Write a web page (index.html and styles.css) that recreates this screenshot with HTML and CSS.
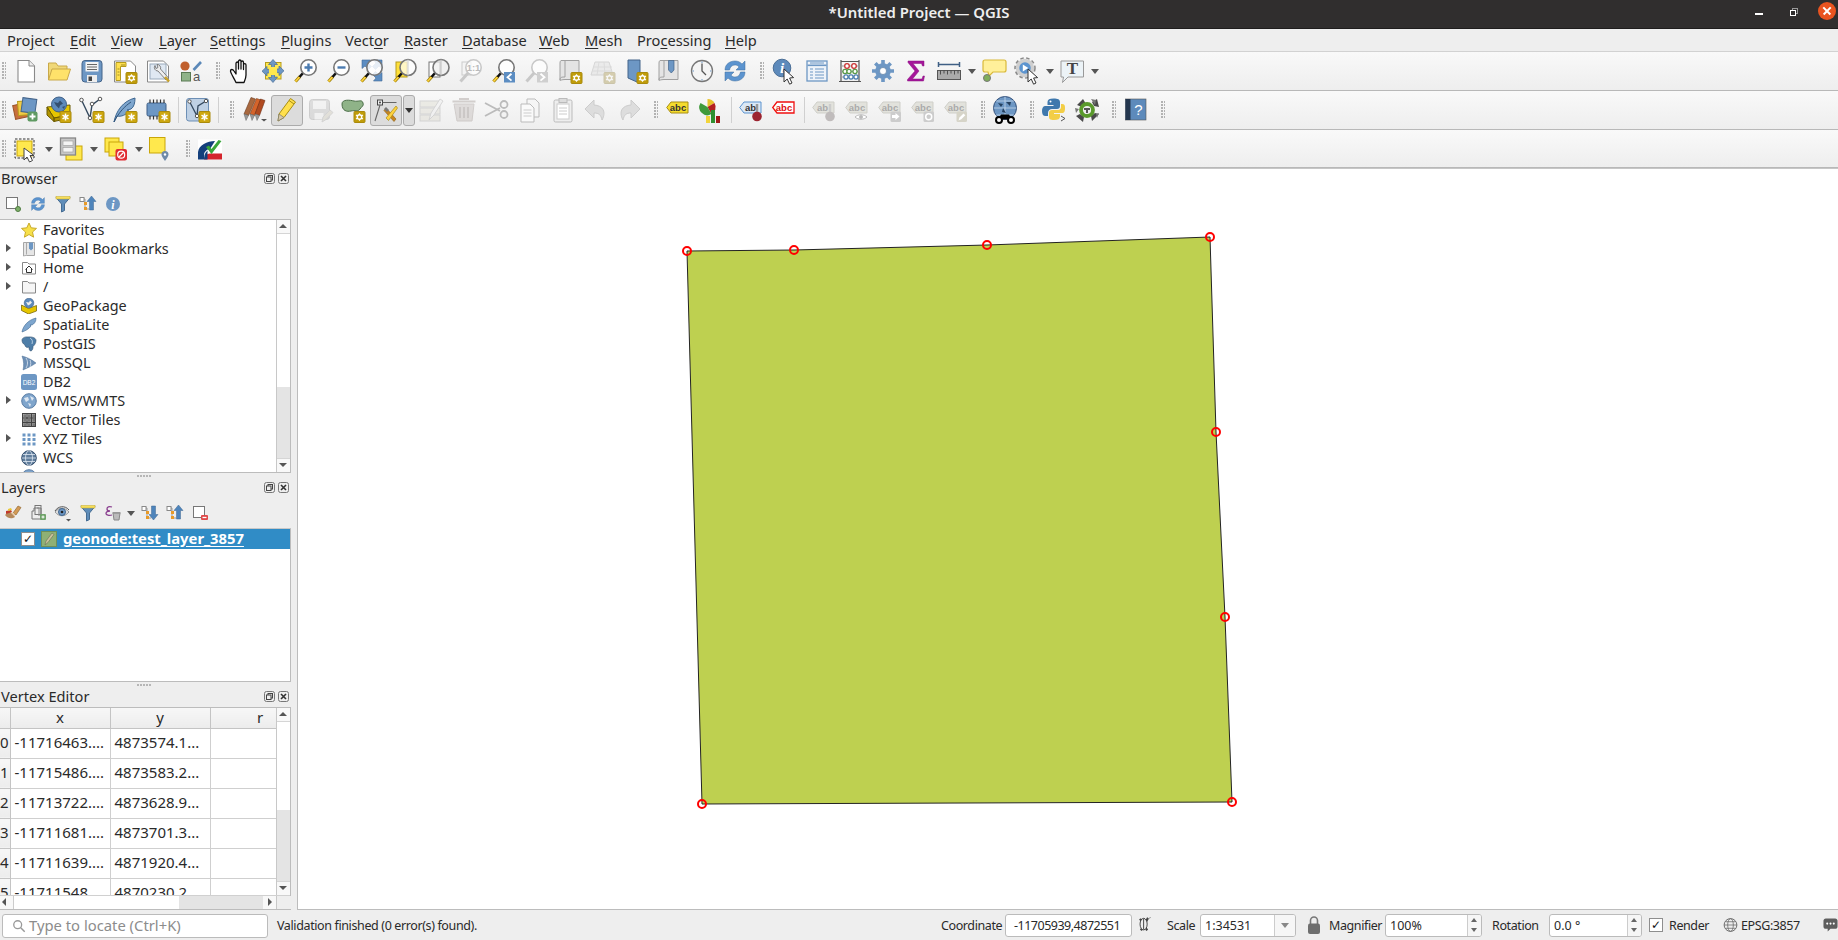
FILE: index.html
```html
<!DOCTYPE html>
<html lang="en">
<head>
<meta charset="utf-8">
<title>*Untitled Project — QGIS</title>
<link rel="stylesheet" href="styles.css">
</head>
<body>
<svg class="defs" xmlns="http://www.w3.org/2000/svg">
<defs>
<g id="star"><rect x="15" y="15.5" width="11" height="11" rx="1" fill="#cda70f" stroke="#a98a0c"/><path d="M20.5 17.5v7M17.5 19.2l6 3.6M17.5 22.8l6-3.6" stroke="#fff" stroke-width="1.5"/></g>
<g id="gear"><rect x="15" y="15.5" width="11" height="11" rx="1" fill="#c09c0a" stroke="#a98a0c"/><circle cx="20.5" cy="21" r="2.2" fill="none" stroke="#fff" stroke-width="1.4"/><path d="M20.5 17.2v1.6M20.5 23.2v1.6M17 19l1.5.9M22.5 22l1.5.9M17 23l1.5-.9M22.5 20l1.5-.9" stroke="#fff" stroke-width="1.2"/></g>
<g id="mg"><path d="M8 19.5L3.5 24.5" stroke="#9a7d00" stroke-width="3.2"/><path d="M8 19.5L3.5 24.5" stroke="#ffd23e" stroke-width="1.7"/><path d="M11.5 15.5L7.5 20" stroke="#111" stroke-width="2.6"/><circle cx="16.5" cy="10.5" r="7.7" fill="#fff" fill-opacity=".85" stroke="#777" stroke-width="1.6"/></g>
<g id="mgg"><path d="M11.5 15.5L3.5 24.5" stroke="#c8c8c8" stroke-width="3"/><circle cx="16.5" cy="10.5" r="7.7" fill="#fff" fill-opacity=".7" stroke="#c8c8c8" stroke-width="1.6"/></g>
<g id="cur"><path d="M0 0L0 13 3.2 10 5.6 15.2 8 14 5.6 9 9.6 8.6Z" fill="#fff" stroke="#333" stroke-width="1"/></g>
<g id="tag"><path d="M7 6h17v11H7l-4.3-5.500z" fill="#e2e2dc" stroke="#cfcfc9"/></g>
</defs>

<symbol id="new" viewBox="0 0 28 28"><path d="M6 3.5h11l5.500 5.500v16H6z" fill="#fff" stroke="#8a8a8a" stroke-width="1.100"/><path d="M17 3.500v5.500h5.500" fill="#eee" stroke="#8a8a8a"/></symbol>
<symbol id="open" viewBox="0 0 28 28"><path d="M3.500 23V6h7.500l2 3h9v4" fill="#f0d878" stroke="#c9a94a"/><path d="M3.500 23l3.500-11h18.500l-3.500 11z" fill="#ffe26a" stroke="#c9a94a"/></symbol>
<symbol id="save" viewBox="0 0 28 28"><rect x="4" y="3.500" width="20" height="21.500" rx="3" fill="#6d97c4" stroke="#44648a"/><rect x="7.500" y="5" width="13" height="9.500" fill="#f4f4f4"/><path d="M9 7.500h10M9 10h10M9 12.500h10" stroke="#666"/><rect x="9" y="18" width="10" height="7" fill="#eee"/><rect x="10.500" y="19.500" width="3.500" height="4.500" fill="#444"/></symbol>
<symbol id="layout" viewBox="0 0 28 28"><path d="M3.500 4h16l5 5v16h-21z" fill="#fff" stroke="#888"/><path d="M5 5.500h10v4H9.500v14H5z" fill="#ffe04d" stroke="#b69b1c"/><path d="M6.500 12h2M6.500 15h2M6.500 18h2M11 7v2M13 7v2" stroke="#8a7a20" stroke-width=".8"/><use href="#gear"/></symbol>
<symbol id="mgr" viewBox="0 0 28 28"><path d="M3.500 4h16l5 5v16h-21z" fill="#fff" stroke="#888"/><rect x="6" y="7" width="16" height="15" fill="#dfe8f2" stroke="#9ab"/><path d="M11 8.500a3.500 3.500 0 0 0 3 5.500l8 9 2.500-2-8-9a3.500 3.500 0 0 0-3.500-4.500l1 3-2 1z" fill="#eee" stroke="#666" stroke-width=".8"/><path d="M21 20l4 4.500" stroke="#c9a32a" stroke-width="2.500"/></symbol>
<symbol id="style" viewBox="0 0 28 28"><circle cx="8" cy="9" r="4.600" fill="#c0602e"/><path d="M16.500 13L24 5" stroke="#5b88b8" stroke-width="2.600"/><rect x="4.500" y="15.500" width="9" height="8.500" fill="#8fb388" stroke="#5a7a54"/></symbol>
<symbol id="hand" viewBox="0 0 28 28"><path d="M10 25.500C8 21 4.500 16 4.500 14c0-2 2.300-2 3.500 0l2 3V6.500c0-2 2.500-2 2.500 0V12V4.500c0-2 2.500-2 2.500 0V12V5.500c0-2 2.500-2 2.500 0v7V8c0-1.800 2.500-1.800 2.500 0v10c0 3-1 5-2 7.500z" fill="#fff" stroke="#111" stroke-width="1.300" stroke-linejoin="round"/></symbol>
<symbol id="panmap" viewBox="0 0 28 28"><rect x="6.500" y="5.500" width="15.500" height="16.500" fill="#ffe84d" stroke="#b69b1c"/><path d="M14 2.500l4.500 5h-3v4.500h4.500v-3l5 4.800-5 4.800v-3h-4.500v4.500h3L14 25.500l-4.500-5h3V16H8v3l-5-4.800 5-4.800v3h4.500V7.500h-3z" fill="#6d97c4" stroke="#4a6e96" stroke-width=".7"/><rect x="10" y="10" width="8" height="8" fill="#ffe84d"/></symbol>
<symbol id="zin" viewBox="0 0 28 28"><use href="#mg"/><path d="M16.500 6.500v8M12.500 10.500h8" stroke="#4b7bb0" stroke-width="2.400"/></symbol>
<symbol id="zout" viewBox="0 0 28 28"><use href="#mg"/><path d="M12.500 10.500h8" stroke="#4b7bb0" stroke-width="2.400"/></symbol>
<symbol id="zfull" viewBox="0 0 28 28"><path d="M4 3h8.500L10 6l3.500 3.500-3 3L7 9l-3 2.500zM24 3v8.500L21 9l-3.500 3.500-3-3L18 6l-2.500-3zM24 24h-8.500l2.500-3-3.500-3.500 3-3L21 18l3-2.500z" fill="#5c8dc2" stroke="#416a97" stroke-width=".6"/><use href="#mg"/></symbol>
<symbol id="zsel" viewBox="0 0 28 28"><rect x="5" y="5" width="11" height="15" fill="#ffe03a" stroke="#b69b1c"/><path d="M8 19.500L3.500 24.500" stroke="#9a7d00" stroke-width="3.200"/><path d="M8 19.500L3.500 24.500" stroke="#ffd23e" stroke-width="1.700"/><path d="M11.500 15.500L7.500 20" stroke="#111" stroke-width="2.600"/><circle cx="17" cy="10.500" r="8" fill="#fff" fill-opacity=".7" stroke="#777" stroke-width="1.600"/><path d="M17 2.500v16" stroke="#ccc"/></symbol>
<symbol id="zlay" viewBox="0 0 28 28"><rect x="5" y="5" width="11" height="15" fill="#fff" stroke="#777"/><path d="M8 19.500L3.500 24.500" stroke="#9a7d00" stroke-width="3.200"/><path d="M8 19.500L3.500 24.500" stroke="#ffd23e" stroke-width="1.700"/><path d="M11.500 15.500L7.500 20" stroke="#111" stroke-width="2.600"/><circle cx="17" cy="10.500" r="8" fill="#eee" fill-opacity=".7" stroke="#777" stroke-width="1.600"/><path d="M17 2.500v16" stroke="#bbb"/></symbol>
<symbol id="z11" viewBox="0 0 28 28"><rect x="5" y="5" width="9" height="13" fill="#f4f4f4" stroke="#ccc"/><use href="#mgg"/></symbol>
<symbol id="zlast" viewBox="0 0 28 28"><use href="#mg"/><rect x="14" y="15" width="11" height="10.500" fill="#5c8dc2"/><path d="M21.500 16.800l-4 3.400 4 3.400" fill="none" stroke="#fff" stroke-width="1.800"/></symbol>
<symbol id="znext" viewBox="0 0 28 28"><use href="#mgg"/><rect x="14" y="15" width="11" height="10.500" fill="#cfcfcf"/><path d="M17.500 16.800l4 3.400-4 3.400" fill="none" stroke="#fff" stroke-width="1.800"/></symbol>
<symbol id="newmap" viewBox="0 0 28 28"><path d="M5 3.500h18v19H9c-3 0-5 1-5 1V6c0-2 1-2.500 1-2.500z" fill="#e4e4e4" stroke="#a0a0a0"/><path d="M4 23c0-3 2-3 5-3V3.500" fill="none" stroke="#a0a0a0"/><use href="#gear"/></symbol>
<symbol id="map3d" viewBox="0 0 28 28"><path d="M6 5h14l4 13H2z" fill="#ddd" stroke="#aaa"/><path d="M10 5L8 18M15 5l1 13M4 10h19M3 14h20" stroke="#bbb"/><use href="#gear"/></symbol>
<symbol id="bknew" viewBox="0 0 28 28"><path d="M6 3h12v18l-3 4-9-4z" fill="#6d97c4" stroke="#44648a"/><use href="#gear"/></symbol>
<symbol id="bkshow" viewBox="0 0 28 28"><path d="M5 3.500h18v19H9c-3 0-5 1-5 1V6c0-2 1-2.500 1-2.500z" fill="#e4e4e4" stroke="#a0a0a0"/><path d="M4 23c0-3 2-3 5-3V3.500" fill="none" stroke="#a0a0a0"/><path d="M13.500 3.500h5.500v9.500l-2.700 3-2.800-3z" fill="#6d97c4" stroke="#44648a" stroke-width=".7"/></symbol>
<symbol id="clock" viewBox="0 0 28 28"><circle cx="14" cy="14" r="10.500" fill="#f4f4f4" stroke="#777" stroke-width="1.300"/><path d="M14 6.500V14l4 4" fill="none" stroke="#555" stroke-width="1.300"/><path d="M14 4.500v1.500M14 22v1.500M4.500 14H6M22 14h1.500" stroke="#6d97c4"/></symbol>
<symbol id="refresh" viewBox="0 0 28 28"><path d="M4 13c0-6 5-9 10-9 3 0 5 1 7 3l3-3v9h-9l3-3c-1-1.500-2.500-2-4-2-3 0-5 2-5.500 5zM24 15c0 6-5 9-10 9-3 0-5-1-7-3l-3 3v-9h9l-3 3c1 1.500 2.500 2 4 2 3 0 5-2 5.500-5z" fill="#5c94cf" stroke="#3e6e9f" stroke-width=".5"/></symbol>
<symbol id="ident" viewBox="0 0 28 28"><circle cx="12" cy="11" r="8.800" fill="#5d8abb" stroke="#4a6e96"/></symbol>
<symbol id="attr" viewBox="0 0 28 28"><rect x="4" y="4" width="20" height="20" fill="#eef3f9" stroke="#6d97c4" stroke-width="1.300"/><path d="M4.500 7.500h19v1.600h-19z" fill="#6d97c4"/><path d="M7 6h14M7 12h3M12 12h9M7 15h3M12 15h9M7 18h3M12 18h9M7 21h3M12 21h9" stroke="#6d97c4"/></symbol>
<symbol id="abacus" viewBox="0 0 28 28"><path d="M5 3v21M23 3v21M5 4.500h18M3 24.500h22" stroke="#555" stroke-width="1.200" fill="none"/><path d="M5 9h18M5 14.500h18M5 20h18" stroke="#999"/><circle cx="11" cy="9" r="2.300" fill="#fff" stroke="#c33" stroke-width="1.300"/><circle cx="18" cy="9" r="2.300" fill="#fff" stroke="#c33" stroke-width="1.300"/><circle cx="9" cy="14.500" r="2.100" fill="#fff" stroke="#5a9a4a" stroke-width="1.300"/><circle cx="13" cy="14.500" r="2.100" fill="#fff" stroke="#5a9a4a" stroke-width="1.300"/><circle cx="19" cy="14.500" r="2.100" fill="#fff" stroke="#5a9a4a" stroke-width="1.300"/><circle cx="10" cy="20" r="2.100" fill="#fff" stroke="#4a7db0" stroke-width="1.300"/><circle cx="15" cy="20" r="2.100" fill="#fff" stroke="#4a7db0" stroke-width="1.300"/><circle cx="20" cy="20" r="2.100" fill="#fff" stroke="#4a7db0" stroke-width="1.300"/></symbol>
<symbol id="cog" viewBox="0 0 28 28"><circle cx="14" cy="14" r="5.800" fill="none" stroke="#6d97c4" stroke-width="4"/><path d="M14 3v22M3 14h22M6.300 6.300l15.400 15.400M21.700 6.300L6.300 21.700" stroke="#6d97c4" stroke-width="3.600"/><circle cx="14" cy="14" r="3.500" fill="#fff" stroke="#4a6e96" stroke-width=".6"/></symbol>
<symbol id="sigma" viewBox="0 0 28 28"><path d="M6 4h16v5h-1.500l-1-2.500h-8.500l6 7.500-6.500 8H20l1-3h1.500L21.500 24H5.500v-1.500l7.500-8.500-7-8.500z" fill="#a5169a" stroke="#8a1180" stroke-width=".5"/></symbol>
<symbol id="measure" viewBox="0 0 28 28"><path d="M3 7.500h22M3.500 5v5M24.500 5v5" stroke="#3f5f85" stroke-width="1.500"/><rect x="2.500" y="13.500" width="23" height="9" fill="#aaa" stroke="#555"/><path d="M5.500 13.500v4M9 13.500v3M12.500 13.500v4M16 13.500v3M19.500 13.500v4M23 13.500v3" stroke="#444" stroke-width=".9"/></symbol>
<symbol id="tip" viewBox="0 0 28 28"><path d="M5 3h19c1.500 0 2 1 2 2v8c0 1-.5 2-2 2H13l-4 4-1-4H5c-1.500 0-2-1-2-2V5c0-1 .5-2 2-2z" fill="#fff09a" stroke="#d9b93a" stroke-width="1.200"/><circle cx="7" cy="21" r="3.500" fill="#7fae5b" stroke="#777"/></symbol>
<symbol id="tips" viewBox="0 0 28 28"><circle cx="12" cy="11" r="7.500" fill="#5c94cf" stroke="#cfcfcf" stroke-width="3.500"/><circle cx="12" cy="11" r="10" fill="none" stroke="#888" stroke-width="1.500" stroke-dasharray="3.500 2.500"/><path d="M9.800 7.500v7l5.500-3.500z" fill="#fff"/><use href="#cur" x="15" y="12"/></symbol>
<symbol id="ttext" viewBox="0 0 28 28"><path d="M3 4h22.500v16H10l-5.500 5.500 1-5.500H3z" fill="#ecf3f7" stroke="#999"/></symbol>

<symbol id="dsm" viewBox="0 0 28 28"><rect x="2" y="8" width="14" height="14" transform="rotate(-12 9 15)" fill="#c86f3c" stroke="#9a5328"/><rect x="6" y="5" width="14" height="14" transform="rotate(-4 13 12)" fill="#f1cb45" stroke="#b69b1c"/><rect x="10" y="2.500" width="14" height="14" transform="rotate(8 17 9)" fill="#6d97c4" stroke="#44648a"/><rect x="15.500" y="15.500" width="10" height="10" rx="2" fill="#5f9a62"/><path d="M20.500 17.500v6M17.500 20.500h6" stroke="#fff" stroke-width="1.800"/></symbol>
<symbol id="gpkg" viewBox="0 0 28 28"><path d="M2 11l7 11 16-3V9z" fill="#e6c600" stroke="#6b5a00"/><path d="M2 11v8l7 6.500V22zM9 22v3.500L25 22v-3z" fill="#b39500" stroke="#6b5a00"/><circle cx="14" cy="8.500" r="7.500" fill="#5d8abb" stroke="#3e5f87"/><path d="M9 6l4 1 2-2.500 3 3-3 2-1 3-3-3zM17 11l3-1-1 3z" fill="#35506f"/><use href="#star"/></symbol>
<symbol id="vnew" viewBox="0 0 28 28"><path d="M3.500 4L12 22 14 9l8-6" fill="none" stroke="#34495e" stroke-width="1.400"/><circle cx="3.500" cy="4" r="1.800" fill="#fff" stroke="#555"/><circle cx="12" cy="22" r="1.800" fill="#fff" stroke="#555"/><circle cx="14" cy="8" r="1.800" fill="#fff" stroke="#555"/><circle cx="22" cy="3" r="1.800" fill="#fff" stroke="#555"/><use href="#star"/></symbol>
<symbol id="feather" viewBox="0 0 28 28"><path d="M3 26C5 15 12 5 24 2c0 5-1 9-4 11l-4 1 2 1c-3 4-8 6-12 5z" fill="#7ea6ce" stroke="#3e6690"/><path d="M3 26C8 16 14 10 20 6" stroke="#31557b" fill="none"/><use href="#star"/></symbol>
<symbol id="chip" viewBox="0 0 28 28"><rect x="3" y="7" width="19" height="13" rx="1.500" fill="#6d97c4" stroke="#3e5f87"/><path d="M6 3.500V7M9.500 3.500V7M13 3.500V7M16.500 3.500V7M20 3.500V7M6 20v3.500M9.500 20v3.500M13 20v3.500" stroke="#333" stroke-width="1.200"/><use href="#star"/></symbol>
<symbol id="virt" viewBox="0 0 28 28"><rect x="2.500" y="2.500" width="22" height="22.500" rx="2.500" fill="#bed0e4" stroke="#6d8fb5"/><path d="M5.500 5.500L13 20 14 10l8-5" fill="none" stroke="#33485f" stroke-width="1.300"/><circle cx="5.500" cy="5.500" r="1.700" fill="#fff" stroke="#555"/><circle cx="13" cy="20" r="1.700" fill="#fff" stroke="#555"/><circle cx="22" cy="5" r="1.700" fill="#fff" stroke="#555"/><use href="#star"/></symbol>
<symbol id="pens" viewBox="0 0 28 28"><path d="M4 18l7-16.500 4.500 1.500-7 16.500z" fill="#a8683f" stroke="#6b3a1e" stroke-width=".6"/><path d="M4 18l4.500 1.500L6 24.500z" fill="#999" stroke="#666" stroke-width=".5"/><path d="M10 18l6.500-15.500 4.500 1.500-6.500 15.500z" fill="#d5642b" stroke="#7a3a18" stroke-width=".6"/><path d="M10 18l4.500 1.500-2.500 5z" fill="#999" stroke="#666" stroke-width=".5"/><path d="M15 18l5.500-15 4.500 1.500-5.500 15z" fill="#b04a20" stroke="#6b2f15" stroke-width=".6"/><path d="M15 18l4.500 1.500-2.500 5z" fill="#999" stroke="#666" stroke-width=".5"/><path d="M21 23h6l-3 2.500z" fill="#555"/></symbol>
<symbol id="pen" viewBox="0 0 28 28"><path d="M5 25l1-7L17.500 2.500l5 3.500L11 21.500z" fill="#ffe04d" stroke="#a88e15"/><path d="M6 18l5 3.500-6 3.500z" fill="#d8c9a8" stroke="#777" stroke-width=".7"/><path d="M16 4.500l5 3.500" stroke="#a88e15"/></symbol>
<symbol id="savee" viewBox="0 0 28 28"><rect x="3.500" y="3.500" width="20" height="20" rx="3" fill="#bbb" stroke="#999"/><rect x="7" y="5" width="13" height="8" fill="#eee"/><rect x="8.500" y="17" width="9" height="6.500" fill="#eee"/><path d="M16 26l1-5 7-7 3 2.500-7 7z" fill="#cfc7a7" stroke="#aaa"/></symbol>
<symbol id="poly" viewBox="0 0 28 28"><path d="M3 8c0-5 8-4 12-3s8-2 9 2c1 3-1 3-3 6s-5 1-9 2-9 0-9-7z" fill="#8fb388" stroke="#4b6e48"/><use href="#gear"/></symbol>
<symbol id="vtool" viewBox="0 0 28 28"><rect x="5.500" y="4" width="5" height="5" fill="#eee" stroke="#444"/><circle cx="8" cy="6.500" r="1" fill="#444"/><path d="M10.500 6.500h14M8 9L3 25" stroke="#666" stroke-width="1.100" fill="none"/><path d="M14 12l10 11-2 2.500-10-11z" fill="#c8861e" stroke="#8a5a10" stroke-width=".6"/><path d="M24 10L14 22l2.500 2.500L25.500 12z" fill="#ffd23e" stroke="#a88e15" stroke-width=".7"/><path d="M12 13l2-2 3 3-2 2z" fill="#777"/></symbol>
<symbol id="medit" viewBox="0 0 28 28"><rect x="3" y="5" width="20" height="6" fill="#dfdcc4" stroke="#aaa"/><rect x="3" y="12" width="20" height="6" fill="#dfdcc4" stroke="#aaa"/><rect x="3" y="19" width="20" height="6" fill="#dfdcc4" stroke="#aaa"/><path d="M12 24l2-7 9-14 3 2-9 14z" fill="#eee" stroke="#aaa"/></symbol>
<symbol id="trash" viewBox="0 0 28 28"><path d="M4 8h20l-2 17H7z" fill="#c8bab4" stroke="#a8968f"/><path d="M2.500 5.500h23M9 3h10" stroke="#a8968f" stroke-width="2"/><path d="M10 11v11M14 11v11M18 11v11" stroke="#8f7d76" stroke-width="1.500"/></symbol>
<symbol id="cut" viewBox="0 0 28 28"><path d="M2 7l15 8M2 20l15-8" stroke="#bbb" stroke-width="1.800"/><circle cx="21" cy="8.500" r="3.500" fill="none" stroke="#bbb" stroke-width="1.800"/><circle cx="21" cy="18.500" r="3.500" fill="none" stroke="#bbb" stroke-width="1.800"/></symbol>
<symbol id="copy" viewBox="0 0 28 28"><path d="M11 3h8l4 4v14H11z" fill="#f6f6f6" stroke="#bbb"/><path d="M5 8h9l4 4v14H5z" fill="#fafafa" stroke="#bbb"/><path d="M7.500 14h8M7.500 17h8M7.500 20h8" stroke="#ccc"/></symbol>
<symbol id="paste" viewBox="0 0 28 28"><rect x="5" y="4" width="18" height="22" rx="1.500" fill="#eee" stroke="#bbb"/><rect x="10" y="2.500" width="8" height="4" fill="#ddd" stroke="#bbb"/><rect x="8" y="8" width="12" height="15" fill="#fff" stroke="#ccc"/><path d="M10 12h8M10 15h8M10 18h8" stroke="#ccc"/></symbol>
<symbol id="undo" viewBox="0 0 28 28"><path d="M12 4L3 13l9 9v-5c5 0 7 2 8 7 3-5 4-14-8-15z" fill="#ddd" stroke="#ccc"/></symbol>
<symbol id="redo" viewBox="0 0 28 28"><path d="M16 4l9 9-9 9v-5c-5 0-7 2-8 7-3-5-4-14 8-15z" fill="#ddd" stroke="#ccc"/></symbol>
<symbol id="lab" viewBox="0 0 28 28"><path d="M7 6h17v11H7l-4.300-5.500z" fill="#f5dc2d" stroke="#a88e15"/></symbol>
<symbol id="diag" viewBox="0 0 28 28"><path d="M10.500 3a8 8 0 0 1 7 4L10.500 11z" fill="#e8c22a"/><path d="M17.500 7a8 8 0 0 1-3 11L10.500 11z" fill="#b32020"/><path d="M14.500 18a8 8 0 0 1-11-11l7 4z" fill="#3f9a3a"/><rect x="9" y="20" width="4" height="7" fill="#f2d43b"/><rect x="14" y="14" width="4" height="13" fill="#2f8f2f"/><rect x="19" y="20" width="4" height="7" fill="#a11818"/></symbol>
<symbol id="labp" viewBox="0 0 28 28"><path d="M7 6h17v11H7l-4.300-5.500z" fill="#dbe8f6" stroke="#5c94cf"/></symbol>
<symbol id="pin" viewBox="0 0 28 28"><path d="M20 8v9" stroke="#999" stroke-width="2.500"/><circle cx="20" cy="20.500" r="4.800" fill="#9c2430"/></symbol>
<symbol id="labr" viewBox="0 0 28 28"><path d="M7 6h17v11H7l-4.300-5.500z" fill="#fff" stroke="#f01010" stroke-width="1.300"/></symbol>
<symbol id="labd" viewBox="0 0 28 28"><use href="#tag"/></symbol>
<symbol id="pind" viewBox="0 0 28 28"><path d="M20 8v9" stroke="#ccc" stroke-width="2.500"/><circle cx="20" cy="20.500" r="4.800" fill="#c0bcbc"/></symbol>
<symbol id="ove" viewBox="0 0 28 28"><path d="M12 21c3-3 9-3 12 0-3 3-9 3-12 0z" fill="#fff" stroke="#bbb"/><circle cx="18" cy="21" r="2" fill="#bbb"/></symbol>
<symbol id="ovm" viewBox="0 0 28 28"><rect x="14.500" y="15.500" width="10.500" height="10.500" rx="1.500" fill="#ccc"/><path d="M16 19h3.500v-2l4 3.500-4 3.500v-2H16z" fill="#fff"/></symbol>
<symbol id="ovo" viewBox="0 0 28 28"><rect x="14.500" y="15.500" width="10.500" height="10.500" rx="1.500" fill="#ccc"/><circle cx="19.700" cy="20.700" r="3" fill="none" stroke="#fff" stroke-width="1.500"/></symbol>
<symbol id="ovc" viewBox="0 0 28 28"><rect x="14.500" y="15.500" width="10.500" height="10.500" rx="1.500" fill="#d6d4c8"/><path d="M16.500 24.500l1-3 4-4 1.800 1.800-4 4z" fill="#fff"/></symbol>
<symbol id="osm" viewBox="0 0 28 28"><circle cx="14" cy="12" r="11.500" fill="#6d97c4" stroke="#33507a"/><path d="M2.500 12h23M14 .5v23M5 5h18M5 19h18" stroke="#cfe0f0" stroke-width=".7"/><path d="M7 7l5 1-2 3zM15 6h5l-1 4zM12 12l3 5-4-1z" fill="#24405f"/><path d="M10 18.500h8l3 5H7z" fill="#000"/><circle cx="8" cy="24" r="3" fill="#fff" stroke="#000" stroke-width="2"/><circle cx="20" cy="24" r="3" fill="#fff" stroke="#000" stroke-width="2"/></symbol>
<symbol id="py" viewBox="0 0 28 28"><path d="M13.500 2.500c-4 0-6 1-6 3.500V9h6v1H5.500C3 10 2 12 2 15s1 5 3.500 5H8v-3c0-2.500 2-4 4-4h5c2 0 3-1 3-3V6c0-2.500-2-3.500-6.500-3.500z" fill="#3f78ad"/><circle cx="10.500" cy="5.500" r="1" fill="#fff"/><path d="M14 24c4 0 6-1 6-3.500V18h-6v-1h8c2.500 0 3-2 3-5s-.5-4-3-4h-1v3c0 2.500-2 3-4 3h-5c-2 0-3 1-3 3v3.500C9 23 10 24 14 24z" fill="#f3ce46"/><path d="M21 20l4 2.500-4 2.500" fill="none" stroke="#555"/></symbol>
<symbol id="plug" viewBox="0 0 28 28"><path d="M4 9l6-6 3 5-4 3zM24 3l2 8-5-1-2-4zM26 18l-7 7-1-5 4-3zM3 20l7 6 1-5-4-3z" fill="#4a4a4a"/><path d="M18 3l5 1-1 5zM2 12l4 1-3 4zM23 18l3-1-2 5z" fill="#777"/><circle cx="14" cy="14" r="6" fill="#eee" stroke="#5a9a2c" stroke-width="3.800"/><path d="M11 12h6v2h-2v3h-2v-3h-2z" fill="#555"/></symbol>
<symbol id="help" viewBox="0 0 28 28"><rect x="3.500" y="3" width="20.500" height="21" fill="#5d8abb" stroke="#555" stroke-width=".6"/><rect x="3.500" y="3" width="5" height="21" fill="#24364e"/></symbol>

<symbol id="sel" viewBox="0 0 28 28"><rect x="3" y="4" width="19" height="19" fill="none" stroke="#333" stroke-dasharray="2.500 1.500"/><rect x="5" y="6" width="15" height="15" fill="#ffe84d" stroke="#c9a608"/><path d="M12 13v12l3-3 2.500 5 3-1.500-2.500-5h4z" fill="#fff" stroke="#444"/></symbol>
<symbol id="seltab" viewBox="0 0 28 28"><rect x="9" y="11" width="16" height="14" fill="#ffe84d" stroke="#c9a608"/><rect x="3.500" y="3" width="15" height="17" fill="#c8c8c8" stroke="#888" stroke-width="1.300"/><rect x="6" y="6" width="10" height="4.500" fill="#f4f4f4" stroke="#999" stroke-width=".6"/><rect x="6" y="12.500" width="10" height="4.500" fill="#f4f4f4" stroke="#999" stroke-width=".6"/></symbol>
<symbol id="desel" viewBox="0 0 28 28"><rect x="3" y="3" width="14" height="14" fill="#ffe84d" stroke="#c9a608"/><rect x="7" y="7" width="14" height="14" fill="#ffe84d" stroke="#c9a608"/><rect x="13.500" y="14" width="11.500" height="11.500" rx="2" fill="#e02d33"/><circle cx="19.200" cy="19.700" r="3.500" fill="none" stroke="#fff" stroke-width="1.200"/><path d="M17 22l4.500-4.500" stroke="#fff" stroke-width="1.200"/></symbol>
<symbol id="selloc" viewBox="0 0 28 28"><rect x="2.500" y="2.500" width="15.500" height="15.500" fill="#ffe84d" stroke="#c9a608"/><path d="M18 26c-2-3-3.500-5-3.500-6.500a3.500 3.500 0 0 1 7 0c0 1.500-1.500 3.500-3.500 6.500z" fill="#6f8aa8"/><circle cx="18" cy="19.500" r="1.200" fill="#fff"/></symbol>
<symbol id="check" viewBox="0 0 28 28"><rect x="2" y="4.500" width="24" height="20" fill="#fff"/><path d="M2 24.500V17C3 10 11 6 19 6l-5 8c-3 0-6 3-6 6v4.500z" fill="#143f7c"/><path d="M8 24.500c0-3 3-6 6-6h12v6z" fill="#d4242c"/><path d="M8 24.500l.500-4.500c.5-1.500 1.500-3 3-4.500v9z" fill="#143f7c"/><path d="M10 12l3-1.500 2.500 3.500 7-9 3 1-10 13z" fill="#3aa63a"/></symbol>

<symbol id="fl" viewBox="0 0 11 11"><rect x=".5" y=".5" width="10" height="10" rx="2" fill="#eee" stroke="#777"/><rect x="4" y="2.500" width="4.500" height="4.500" fill="none" stroke="#444"/><rect x="2.500" y="4" width="4.500" height="4.500" fill="#eee" stroke="#444"/></symbol>
<symbol id="cl" viewBox="0 0 11 11"><rect x=".5" y=".5" width="10" height="10" rx="2" fill="#eee" stroke="#777"/><path d="M3 3l5 5M8 3L3 8" stroke="#333" stroke-width="1.600"/></symbol>

<symbol id="s-add" viewBox="0 0 18 18"><rect x="2.500" y="2.500" width="11" height="11" fill="#fff" stroke="#777"/><circle cx="14" cy="14" r="2.500" fill="#7fb06a" stroke="#4f7c42"/></symbol>
<symbol id="s-ref" viewBox="0 0 28 28"><use href="#refresh"/></symbol>
<symbol id="s-fil" viewBox="0 0 18 18"><path d="M2 2.500h14L10.500 9v6.500l-3 1.500V9z" fill="#5f8db9" stroke="#456c92"/><rect x="2" y="1.500" width="14" height="2.500" fill="#f6de5c" stroke="#c2a92e" stroke-width=".5"/></symbol>
<symbol id="s-col" viewBox="0 0 18 18"><path d="M2 4h4v10h4" fill="none" stroke="#999"/><rect x="1" y="2.500" width="4" height="4" fill="#fff" stroke="#888"/><rect x="5" y="7" width="3" height="3" fill="#e89a28"/><rect x="5" y="12" width="3" height="3" fill="#e89a28"/><path d="M12.500 1L17 6.500h-2.500V15h-4V6.500H8z" fill="#4e84bb" stroke="#3e6690" stroke-width=".5"/></symbol>
<symbol id="s-exp" viewBox="0 0 18 18"><path d="M2 4h4v10h4" fill="none" stroke="#999"/><rect x="1" y="2.500" width="4" height="4" fill="#fff" stroke="#888"/><rect x="5" y="7" width="3" height="3" fill="#e89a28"/><rect x="5" y="12" width="3" height="3" fill="#e89a28"/><path d="M12.500 16L17 10.500h-2.500V2h-4v8.500H8z" fill="#4e84bb" stroke="#3e6690" stroke-width=".5"/></symbol>
<symbol id="s-inf" viewBox="0 0 18 18"><circle cx="9" cy="9" r="7" fill="#6d97c4"/></symbol>
<symbol id="s-brush" viewBox="0 0 18 18"><path d="M9 9l5-7 3 1.500L12 11z" fill="#d39a55" stroke="#8a5e27" stroke-width=".6"/><path d="M3 8l7 1 1 4-7-.5z" fill="#e9c8a3"/><path d="M1 11c2-2 3-3 5-3l5 5c-3 2-7 2-10-2z" fill="#b5885a"/><path d="M2 7l5-1 1 2-6 2z" fill="#c0392b"/><path d="M4 5l3-1 1 2-4 1z" fill="#e9c83a"/></symbol>
<symbol id="s-grp" viewBox="0 0 18 18"><path d="M5 4h7v11H3V7h2z" fill="#eee" stroke="#777"/><rect x="6" y="1.500" width="6" height="9" fill="none" stroke="#777"/><path d="M8 4h2v8" fill="none" stroke="#888"/><rect x="11" y="10" width="6" height="6" rx="1" fill="#6fa36a"/><path d="M14 11.500v3M12.500 13h3" stroke="#fff"/></symbol>
<symbol id="s-eye" viewBox="0 0 18 18"><path d="M1 8c4-5 10-5 14 0-4 5-10 5-14 0z" fill="#ddd" stroke="#999"/><circle cx="8" cy="8" r="3.500" fill="#6d97c4" stroke="#3e6690"/><circle cx="8" cy="8" r="1.300" fill="#222"/><path d="M1 7c3-5 10-6 14-1" fill="none" stroke="#555"/><path d="M12 15h5l-2.500 2.500z" fill="#555"/></symbol>
<symbol id="s-eps" viewBox="0 0 18 18"><path d="M8 3c-3-1-5 0-5 2 0 1.500 1 2 3 2-3 0-4 1-4 2.500S5 12 8 11" fill="none" stroke="#8a3f8f" stroke-width="1.300"/><path d="M9 9h7l-1 7H10z" fill="#bbb" stroke="#888"/><rect x="8.500" y="8" width="8" height="1.500" fill="#999"/></symbol>
<symbol id="s-rem" viewBox="0 0 18 18"><rect x="2.500" y="2.500" width="11" height="11" fill="#fff" stroke="#777"/><rect x="10" y="11" width="7" height="5" rx="1" fill="#e04a4a"/><path d="M11.500 13.500h4" stroke="#fff" stroke-width="1.300"/></symbol>

<symbol id="t-star" viewBox="0 0 16 16"><path d="M8 1l2.200 4.800 5.300.6-4 3.600 1.100 5.200L8 12.500l-4.600 2.700L4.500 10l-4-3.600 5.300-.6z" fill="#f7e04a" stroke="#c7a92a"/></symbol>
<symbol id="t-book" viewBox="0 0 16 16"><path d="M2.500 1.500h11v13h-8c-2 0-3 .5-3 .5z" fill="#e6e6e6" stroke="#a6a6a6"/><path d="M5.500 1.500v12" stroke="#aaa"/><path d="M8 1.500h4v6l-2 2-2-2z" fill="#6d97c4"/></symbol>
<symbol id="t-home" viewBox="0 0 16 16"><path d="M1.500 14V2.500h5l1.500 1.500h6.500v10z" fill="#fff" stroke="#888"/><path d="M4.500 9.500L8 6l3.500 3.500M5.500 9v3.500h5V9" fill="none" stroke="#333"/></symbol>
<symbol id="t-dir" viewBox="0 0 16 16"><path d="M1.500 14V2.500h5l1.500 1.500h6.500v10z" fill="#f6f6f6" stroke="#888"/></symbol>
<symbol id="t-gpkg" viewBox="0 0 16 16"><path d="M0.500 7l7 3.500 8-3v5.500l-8 3-7-3.500z" fill="#e6c600" stroke="#6b5a00" stroke-width=".7"/><circle cx="8" cy="5" r="4.800" fill="#5d8abb" stroke="#3e5f87" stroke-width=".6"/><path d="M5 4l3 .5 1-2 2 2-2 2-2 1z" fill="#eee"/></symbol>
<symbol id="t-feat" viewBox="0 0 16 16"><path d="M1 15C2 9 7 3 15 1c0 4-2 6-4 7l-2 0 1 1C8 12 4 14 1 15z" fill="#7ea6ce" stroke="#3e6690" stroke-width=".6"/></symbol>
<symbol id="t-pg" viewBox="0 0 16 16"><path d="M1 4c0-2 3-3.500 6-3 3-.5 8 .5 8 3.500 0 3-2 5-3 6 0 2-.5 4-2 4.500-2 0-2-3-2-4-2 1-4 0-4-2C2 8 1 6 1 4z" fill="#4e7ea8" stroke="#2f4f6f" stroke-width=".6"/><path d="M9 2c2 1 3 3 2 6" fill="none" stroke="#cfe0f0" stroke-width=".8"/></symbol>
<symbol id="t-ms" viewBox="0 0 16 16"><path d="M1 1c4 1 9 3 14 7-4 3-9 5-13 7 1-4 1-9-1-14z" fill="#6d8fb5" stroke="#4a6e96" stroke-width=".5"/><path d="M5 3c2 3 2 7 0 10M9 5c1 2 1 5 0 7" fill="none" stroke="#dfe8f2" stroke-width=".8"/></symbol>
<symbol id="t-db" viewBox="0 0 16 16"><rect width="16" height="16" rx="2.500" fill="#6d97c4"/></symbol>
<symbol id="t-wms" viewBox="0 0 16 16"><circle cx="8" cy="8" r="7.300" fill="#7fa5cc" stroke="#5b7ea6"/><path d="M3 5l4-1 1 3-3 2zM9 3l4 2-2 3zM7 10l3 1-1 3z" fill="#dfe8f2"/></symbol>
<symbol id="t-vt" viewBox="0 0 16 16"><rect x="1.500" y="1.500" width="13" height="13" fill="#fff" stroke="#444"/><path d="M6 1.500v13M10.500 1.500v13M1.500 6h13M1.500 10.500h13" stroke="#444" stroke-width="1.300"/><rect x="2.200" y="2.200" width="3" height="3" fill="#777"/><rect x="6.800" y="2.200" width="3" height="3" fill="#777"/><rect x="11.200" y="2.200" width="2.800" height="3" fill="#777"/><rect x="2.200" y="6.800" width="3" height="3" fill="#777"/><rect x="6.800" y="6.800" width="3" height="3" fill="#777"/><rect x="11.200" y="6.800" width="2.800" height="3" fill="#777"/><rect x="2.200" y="11.200" width="3" height="2.800" fill="#777"/><rect x="6.800" y="11.200" width="3" height="2.800" fill="#777"/><rect x="11.200" y="11.200" width="2.800" height="2.800" fill="#777"/></symbol>
<symbol id="t-xyz" viewBox="0 0 16 16"><path d="M1.500 2.500h3v3h-3zM6.500 2.500h3v3h-3zM11.500 2.500h3v3h-3zM1.500 7h3v3h-3zM6.500 7h3v3h-3zM11.500 7h3v3h-3zM1.500 11.500h3v3h-3zM6.500 11.500h3v3h-3zM11.500 11.500h3v3h-3z" fill="#6d97c4"/></symbol>
<symbol id="t-wcs" viewBox="0 0 16 16"><circle cx="8" cy="8" r="7.300" fill="#5f7d9c" stroke="#35506f"/><ellipse cx="8" cy="8" rx="3.500" ry="7.300" fill="none" stroke="#dfe8f2" stroke-width=".8"/><path d="M1 8h14M2 4.500h12M2 11.500h12" stroke="#dfe8f2" stroke-width=".8"/></symbol>
<symbol id="t-layer" viewBox="0 0 16 16"><rect x=".5" y=".5" width="15" height="15" fill="#8fb075" stroke="#6f8f58"/><path d="M4 14l1-4 6-8 2 1.500-6 8z" fill="#c9c29b" stroke="#707a5c" stroke-width=".7"/></symbol>

<symbol id="i-loc" viewBox="0 0 16 16"><circle cx="6.500" cy="6.500" r="4.500" fill="none" stroke="#999" stroke-width="1.500"/><path d="M10 10l4.500 4.500" stroke="#999" stroke-width="1.700"/></symbol>
<symbol id="i-coord" viewBox="0 0 16 18"><path d="M3 2l8 13M12 1L4 15" stroke="#444" stroke-width="2.500" fill="none"/><ellipse cx="7" cy="8" rx="4" ry="6.500" fill="#eee" stroke="#333"/><path d="M7 2v12" stroke="#333"/><path d="M12 2l3-1.500" stroke="#888"/></symbol>
<symbol id="i-lock" viewBox="0 0 14 20"><path d="M3.500 9V5.500a3.500 3.500 0 0 1 7 0V9" fill="none" stroke="#777" stroke-width="1.600"/><rect x="1" y="8.500" width="12" height="10.500" rx="2" fill="#6e6e6e"/></symbol>
<symbol id="i-globe" viewBox="0 0 16 16"><circle cx="8" cy="8" r="6.800" fill="#eee" stroke="#666"/><ellipse cx="8" cy="8" rx="3" ry="6.800" fill="none" stroke="#666" stroke-width=".8"/><path d="M1.200 8h13.600M2.500 4.500h11M2.500 11.500h11" stroke="#666" stroke-width=".8"/></symbol>
<symbol id="i-msg" viewBox="0 0 16 16"><path d="M3 1h10c1.500 0 2.500 1 2.500 2.500v6c0 1.500-1 2.500-2.500 2.500H8l-3 3v-3H3C1.500 12 .5 11 .5 9.500v-6C.5 2 1.500 1 3 1z" fill="#5e5e5e"/><circle cx="4.500" cy="6.500" r="1.100" fill="#fff"/><circle cx="8" cy="6.500" r="1.100" fill="#fff"/><circle cx="11.500" cy="6.500" r="1.100" fill="#fff"/></symbol>
</svg>

<header class="title"><span>*Untitled Project — QGIS</span>
  <div class="wbtns"><i class="w-min"></i><i class="w-max"></i><i class="w-close"></i></div>
</header>
<nav class="menu">
  <a>Pro<u>j</u>ect</a><a><u>E</u>dit</a><a><u>V</u>iew</a><a><u>L</u>ayer</a><a><u>S</u>ettings</a><a><u>P</u>lugins</a><a>Vect<u>o</u>r</a><a><u>R</u>aster</a><a><u>D</u>atabase</a><a><u>W</u>eb</a><a><u>M</u>esh</a><a>Pro<u>c</u>essing</a><a><u>H</u>elp</a>
</nav>

<div class="tb">
  <b class="grip first"></b>
  <svg class="i"><use href="#new"/></svg><svg class="i"><use href="#open"/></svg><svg class="i"><use href="#save"/></svg><svg class="i"><use href="#layout"/></svg><svg class="i"><use href="#mgr"/></svg><svg class="i" viewBox="0 0 28 28"><use href="#style"/><text x="16" y="24" class="it a13" fill="#555">a</text></svg>
  <b class="grip"></b>
  <svg class="i"><use href="#hand"/></svg><svg class="i"><use href="#panmap"/></svg><svg class="i"><use href="#zin"/></svg><svg class="i"><use href="#zout"/></svg><svg class="i"><use href="#zfull"/></svg><svg class="i"><use href="#zsel"/></svg><svg class="i"><use href="#zlay"/></svg><svg class="i" viewBox="0 0 28 28"><use href="#z11"/><text x="16.500" y="14" class="it b9" fill="#bbb" text-anchor="middle">1:1</text></svg><svg class="i"><use href="#zlast"/></svg><svg class="i"><use href="#znext"/></svg><svg class="i"><use href="#newmap"/></svg><svg class="i off"><use href="#map3d"/></svg><svg class="i"><use href="#bknew"/></svg><svg class="i"><use href="#bkshow"/></svg><svg class="i"><use href="#clock"/></svg><svg class="i"><use href="#refresh"/></svg>
  <b class="grip"></b>
  <svg class="i" viewBox="0 0 28 28"><use href="#ident"/><text x="12" y="16" class="ib" fill="#fff" text-anchor="middle">i</text><use href="#cur" x="14" y="12"/></svg><svg class="i"><use href="#attr"/></svg><svg class="i"><use href="#abacus"/></svg><svg class="i"><use href="#cog"/></svg><svg class="i"><use href="#sigma"/></svg><svg class="i"><use href="#measure"/></svg><b class="dd"></b><svg class="i"><use href="#tip"/></svg><svg class="i"><use href="#tips"/></svg><b class="dd"></b><svg class="i" viewBox="0 0 28 28"><use href="#ttext"/><text x="14.500" y="17" class="is" fill="#444" text-anchor="middle">T</text></svg><b class="dd"></b>
</div>

<div class="tb">
  <b class="grip first"></b>
  <svg class="i"><use href="#dsm"/></svg><svg class="i"><use href="#gpkg"/></svg><svg class="i"><use href="#vnew"/></svg><svg class="i"><use href="#feather"/></svg><svg class="i"><use href="#chip"/></svg><b class="sep"></b><svg class="i"><use href="#virt"/></svg><b class="sep"></b>
  <b class="grip"></b>
  <svg class="i"><use href="#pens"/></svg>
  <span class="act"><svg class="i"><use href="#pen"/></svg></span>
  <svg class="i off"><use href="#savee"/></svg><svg class="i"><use href="#poly"/></svg>
  <span class="act"><svg class="i"><use href="#vtool"/></svg></span><b class="dd act-dd"></b>
  <svg class="i off"><use href="#medit"/></svg><svg class="i off"><use href="#trash"/></svg><svg class="i"><use href="#cut"/></svg><svg class="i"><use href="#copy"/></svg><svg class="i"><use href="#paste"/></svg><svg class="i"><use href="#undo"/></svg><svg class="i"><use href="#redo"/></svg>
  <b class="grip"></b>
  <svg class="i" viewBox="0 0 28 28"><use href="#lab"/><text x="14" y="15" class="it b9" fill="#333" text-anchor="middle">abc</text></svg><svg class="i"><use href="#diag"/></svg><b class="sep"></b><svg class="i" viewBox="0 0 28 28"><use href="#labp"/><text x="13.500" y="15" class="it b9" fill="#333" text-anchor="middle">ab</text><use href="#pin"/></svg><svg class="i" viewBox="0 0 28 28"><use href="#labr"/><text x="14" y="15" class="it b9" fill="#e01010" text-anchor="middle">abc</text></svg><b class="sep"></b>
  <svg class="i" viewBox="0 0 28 28"><use href="#labd"/><text x="12.500" y="15" class="it b9" fill="#aaa" text-anchor="middle">ab</text><use href="#pind"/></svg>
  <svg class="i" viewBox="0 0 28 28"><use href="#labd"/><text x="14" y="15" class="it b9" fill="#aaa" text-anchor="middle">abc</text><use href="#ove"/></svg>
  <svg class="i" viewBox="0 0 28 28"><use href="#labd"/><text x="14" y="15" class="it b9" fill="#aaa" text-anchor="middle">abc</text><use href="#ovm"/></svg>
  <svg class="i" viewBox="0 0 28 28"><use href="#labd"/><text x="14" y="15" class="it b9" fill="#aaa" text-anchor="middle">abc</text><use href="#ovo"/></svg>
  <svg class="i" viewBox="0 0 28 28"><use href="#labd"/><text x="14" y="15" class="it b9" fill="#aaa" text-anchor="middle">abc</text><use href="#ovc"/></svg>
  <b class="grip"></b><svg class="i"><use href="#osm"/></svg>
  <b class="grip"></b><svg class="i"><use href="#py"/></svg><svg class="i"><use href="#plug"/></svg>
  <b class="grip"></b><svg class="i" viewBox="0 0 28 28"><use href="#help"/><text x="16.500" y="18.500" class="it q" fill="#fff" text-anchor="middle">?</text></svg>
  <b class="grip"></b>
</div>

<div class="tb tb3">
  <b class="grip first"></b>
  <svg class="i"><use href="#sel"/></svg><b class="dd"></b><svg class="i"><use href="#seltab"/></svg><b class="dd"></b><svg class="i"><use href="#desel"/></svg><b class="dd"></b><svg class="i"><use href="#selloc"/></svg>
  <b class="grip"></b><svg class="i"><use href="#check"/></svg>
</div>

<main class="main">
  <aside class="dock">
    <section class="panel">
      <div class="ptitle"><span>Browser</span><svg class="pb"><use href="#fl"/></svg><svg class="pb pc"><use href="#cl"/></svg></div>
      <div class="ptools"><svg class="t"><use href="#s-add"/></svg><svg class="t"><use href="#s-ref"/></svg><svg class="t"><use href="#s-fil"/></svg><svg class="t"><use href="#s-col"/></svg><svg class="t" viewBox="0 0 18 18"><use href="#s-inf"/><text x="9" y="13.500" class="ib2" fill="#fff" text-anchor="middle">i</text></svg></div>
      <div class="tree">
        <ul class="rows">
          <li><svg class="ti"><use href="#t-star"/></svg>Favorites</li>
          <li class="ex"><svg class="ti"><use href="#t-book"/></svg>Spatial Bookmarks</li>
          <li class="ex"><svg class="ti"><use href="#t-home"/></svg>Home</li>
          <li class="ex"><svg class="ti"><use href="#t-dir"/></svg>/</li>
          <li><svg class="ti"><use href="#t-gpkg"/></svg>GeoPackage</li>
          <li><svg class="ti"><use href="#t-feat"/></svg>SpatiaLite</li>
          <li><svg class="ti"><use href="#t-pg"/></svg>PostGIS</li>
          <li><svg class="ti"><use href="#t-ms"/></svg>MSSQL</li>
          <li><svg class="ti" viewBox="0 0 16 16"><use href="#t-db"/><text x="8" y="10.500" class="it b6" fill="#fff" text-anchor="middle">DB2</text></svg>DB2</li>
          <li class="ex"><svg class="ti"><use href="#t-wms"/></svg>WMS/WMTS</li>
          <li><svg class="ti"><use href="#t-vt"/></svg>Vector Tiles</li>
          <li class="ex"><svg class="ti"><use href="#t-xyz"/></svg>XYZ Tiles</li>
          <li><svg class="ti"><use href="#t-wcs"/></svg>WCS</li>
          <li><svg class="ti"><use href="#t-wms"/></svg></li>
        </ul>
        <div class="vsb"><b class="sb-btn up"></b><b class="thumb th1"></b><b class="track tr1"></b><b class="sb-btn dn"></b></div>
      </div>
    </section>
    <div class="split"></div>
    <section class="panel">
      <div class="ptitle"><span>Layers</span><svg class="pb"><use href="#fl"/></svg><svg class="pb pc"><use href="#cl"/></svg></div>
      <div class="ptools lt"><svg class="t"><use href="#s-brush"/></svg><svg class="t"><use href="#s-grp"/></svg><svg class="t"><use href="#s-eye"/></svg><svg class="t"><use href="#s-fil"/></svg><svg class="t"><use href="#s-eps"/></svg><b class="dd"></b><svg class="t"><use href="#s-exp"/></svg><svg class="t"><use href="#s-col"/></svg><svg class="t"><use href="#s-rem"/></svg></div>
      <div class="layers"><div class="lrow"><i class="cb">✓</i><svg class="ti"><use href="#t-layer"/></svg><u>geonode:test_layer_3857</u></div></div>
    </section>
    <div class="split"></div>
    <section class="panel">
      <div class="ptitle"><span>Vertex Editor</span><svg class="pb"><use href="#fl"/></svg><svg class="pb pc"><use href="#cl"/></svg></div>
      <div class="vx">
        <div class="vx-top">
          <div class="vx-clip">
            <table class="vt">
              <colgroup><col class="c0"><col class="c1"><col class="c1"><col class="c2"></colgroup>
              <thead><tr><th></th><th>x</th><th>y</th><th class="hr">r</th></tr></thead>
              <tbody>
                <tr><th>0</th><td>-11716463....</td><td>4873574.1...</td><td></td></tr>
                <tr><th>1</th><td>-11715486....</td><td>4873583.2...</td><td></td></tr>
                <tr><th>2</th><td>-11713722....</td><td>4873628.9...</td><td></td></tr>
                <tr><th>3</th><td>-11711681....</td><td>4873701.3...</td><td></td></tr>
                <tr><th>4</th><td>-11711639....</td><td>4871920.4...</td><td></td></tr>
                <tr><th>5</th><td>-11711548....</td><td>4870230.2...</td><td></td></tr>
              </tbody>
            </table>
          </div>
          <div class="vsb vsb2"><b class="sb-btn up"></b><b class="thumb th2"></b><b class="track tr2"></b><b class="sb-btn dn"></b></div>
        </div>
        <div class="hsb"><b class="hb lf"></b><b class="hthumb"></b><b class="htrack"></b><b class="hb rt"></b><b class="corner"></b></div>
      </div>
    </section>
  </aside>
  <div class="canvas">
    <svg class="map" viewBox="298 169 1540 740" xmlns="http://www.w3.org/2000/svg">
      <polygon class="feat" points="687,251 794,250 987,245 1210,237 1216,432 1225,617 1232,802 702,804"/>
      <g class="vtx"><circle cx="687" cy="251" r="4"/><circle cx="794" cy="250" r="4"/><circle cx="987" cy="245" r="4"/><circle cx="1210" cy="237" r="4"/><circle cx="1216" cy="432" r="4"/><circle cx="1225" cy="617" r="4"/><circle cx="1232" cy="802" r="4"/><circle cx="702" cy="804" r="4"/></g>
    </svg>
  </div>
</main>

<footer class="status">
  <div class="locator"><svg class="loc"><use href="#i-loc"/></svg><span>Type to locate (Ctrl+K)</span></div>
  <span class="smsg">Validation finished (0 error(s) found).</span>
  <div class="sright">
    <span class="lbl w61">Coordinate</span>
    <span class="fld f-coord">-11705939,4872551</span>
    <svg class="si m5"><use href="#i-coord"/></svg>
    <span class="lbl w28 m15">Scale</span>
    <span class="fld f-scale"><em>1:34531</em><i class="carr"></i></span>
    <svg class="si-l"><use href="#i-lock"/></svg>
    <span class="lbl w53 m8">Magnifier</span>
    <span class="fld f-mag"><em>100%</em><i class="spin"><b></b><b></b></i></span>
    <span class="lbl w47 m10">Rotation</span>
    <span class="fld f-rot"><em>0.0 °</em><i class="spin"><b></b><b></b></i></span>
    <i class="cb cb2">✓</i>
    <span class="lbl w38 m6">Render</span>
    <svg class="si m16"><use href="#i-globe"/></svg>
    <span class="lbl w58 m3">EPSG:3857</span>
    <svg class="si m24"><use href="#i-msg"/></svg>
  </div>
</footer>
</body>
</html>
```

FILE: styles.css
```css
* { box-sizing: border-box; }
html, body { margin: 0; height: 100%; overflow: hidden; }
body {
  width: 1838px; height: 940px;
  display: flex; flex-direction: column;
  background: #eee; color: #2a2a2a;
  font: 14.6px/1.2 "Noto Sans", "Open Sans", sans-serif;
}
.defs { position: absolute; width: 0; height: 0; overflow: hidden; }
.it { font-family: "Liberation Sans", sans-serif; }
.b9 { font-size: 9.5px; font-weight: 700; }
.b6 { font-size: 6.5px; }
.a13 { font-size: 13px; }
.ib { font: italic 700 15px "Liberation Serif", serif; }
.ib2 { font: italic 700 12px "Liberation Serif", serif; }
.is { font: 700 17px "Liberation Serif", serif; }
.q { font-size: 15px; }

/* title */
.title {
  height: 29px; flex: none; position: relative;
  background: #302e2e; border-bottom: 1px solid #1e1d1d;
  color: #eee; font-weight: 600; font-size: 14.9px;
  display: flex; justify-content: center; align-items: flex-start;
  line-height: 25px;
}
.wbtns { position: absolute; inset: 0; }
.wbtns i { position: absolute; display: block; }
.w-min { left: 1755px; top: 13px; width: 8px; height: 1.5px; background: #fff; }
.w-max { left: 1790px; top: 10px; width: 6px; height: 6px; border: 1px solid #fff; box-shadow: 2px -2px 0 -1px #302e2e, 2px -2px 0 0 #999; }
.w-close { left: 1818px; top: 2px; width: 18px; height: 18px; border-radius: 50%; background: #e95420; }
.w-close::before, .w-close::after {
  content: ""; position: absolute; left: 4px; top: 8.25px; width: 10px; height: 1.5px; background: #fff; transform: rotate(45deg);
}
.w-close::after { transform: rotate(-45deg); }

/* menu */
.menu {
  height: 23px; flex: none; padding-left: 7px;
  background: #eee; border-bottom: 1px solid #d2d2d2;
  display: grid; align-items: center; line-height: 21px;
  grid-template-columns: 63px 41px 48px 51px 71px 64px 59px 58px 77px 46px 52px 88px auto;
}
.menu a { white-space: nowrap; }
.menu u { text-decoration-thickness: 1px; text-underline-offset: 2px; }

/* toolbars */
.tb {
  height: 39px; flex: none; padding-left: 2px;
  display: flex; align-items: center;
  background: linear-gradient(#f9f9f9, #eeeeee);
  border-bottom: 1px solid #b8b8b8;
}
.tb3 { height: 38px; }
.i { width: 28px; height: 28px; margin: 0 2.5px; flex: none; display: block; }
.i.off { opacity: .42; filter: grayscale(.5); }
.grip {
  width: 4px; height: 18px; flex: none; margin: 0 3.5px 0 8.5px;
  background: radial-gradient(circle at 1px 1px, #b2b2b2 .8px, transparent 1.1px) 0 0 / 3px 3px;
}
.grip.first { margin-left: 0; }
.sep { width: 1px; height: 26px; margin: 0 3px; background: #d0d0d0; flex: none; }
.dd { width: 12px; height: 20px; flex: none; position: relative; }
.dd::after {
  content: ""; position: absolute; left: 2px; top: 8px;
  border: 4px solid transparent; border-top: 5px solid #555; border-bottom: 0;
}
.act {
  width: 32px; height: 31px; margin: 0 .5px; flex: none;
  display: flex; align-items: center; justify-content: center;
  background: #dcdcdc; border: 1px solid #ababab; border-radius: 3px;
}
.act .i { margin: 0; }
.act-dd { height: 31px; background: #dcdcdc; border: 1px solid #ababab; border-radius: 3px; }
.act-dd::after { left: 1px; top: 12px; border-top-color: #333; }

/* main */
.main { height: 742px; flex: none; display: flex; border-top: 1px solid #c6c6c6; }
.dock { width: 297px; flex: none; display: flex; flex-direction: column; background: #eee; }
.panel { width: 291px; flex: none; }
.ptitle { height: 20px; display: flex; align-items: center; padding: 0 1px 1px 1px; }
.ptitle span { flex: 1; white-space: nowrap; }
.pb { width: 11px; height: 11px; flex: none; }
.pc { margin: 0 1px 0 3px; }
.ptools { height: 30px; display: flex; align-items: center; }
.t { width: 18px; height: 18px; margin: 0 3.5px; flex: none; }

.tree { height: 254px; background: #fff; border: 1px solid #bcbcbc; border-left: 0; display: flex; overflow: hidden; }
.rows { list-style: none; margin: 0; padding: 0; flex: 1; overflow: hidden; font-size: 14.4px; }
.rows li { height: 19px; display: flex; align-items: center; padding-left: 21px; position: relative; white-space: nowrap; }
.ti { width: 16px; height: 16px; flex: none; margin-right: 6px; }
.ex::before {
  content: ""; position: absolute; left: 6px; top: 5px;
  border: 4px solid transparent; border-left: 5px solid #555; border-right: 0;
}

.vsb { width: 14px; flex: none; display: flex; flex-direction: column; border-left: 1px solid #c8c8c8; }
.sb-btn { height: 14px; flex: none; background: #f8f8f8; position: relative; }
.up { border-bottom: 1px solid #d5d5d5; }
.dn { border-top: 1px solid #d5d5d5; }
.up::after, .dn::after { content: ""; position: absolute; left: 2px; top: 4px; border: 4px solid transparent; border-top: 0; border-bottom: 4px solid #555; }
.dn::after { border-bottom: 0; border-top: 4px solid #555; }
.thumb { background: #fff; flex: none; }
.track { background: #e4e4e4; flex: 1; }
.th1 { height: 153px; }
.th2 { height: 88px; }

.split {
  height: 5px; width: 291px; flex: none;
  background: radial-gradient(circle at 1px 1px, #b5b5b5 .7px, transparent 1px) 137px 2px / 3px 3px no-repeat,
              radial-gradient(circle at 1px 1px, #b5b5b5 .7px, transparent 1px) 140px 2px / 3px 3px no-repeat,
              radial-gradient(circle at 1px 1px, #b5b5b5 .7px, transparent 1px) 143px 2px / 3px 3px no-repeat,
              radial-gradient(circle at 1px 1px, #b5b5b5 .7px, transparent 1px) 146px 2px / 3px 3px no-repeat,
              radial-gradient(circle at 1px 1px, #b5b5b5 .7px, transparent 1px) 149px 2px / 3px 3px no-repeat;
}

.layers { height: 154px; background: #fff; border: 1px solid #bcbcbc; border-left: 0; border-top-color: #c8c8c8; }
.lrow {
  height: 20px; display: flex; align-items: center; padding-left: 21px;
  background: #308cc6; color: #fff; font-weight: 700; white-space: nowrap; font-size: 14.8px;
}
.lrow u { text-underline-offset: 2px; }
.cb {
  width: 14px; height: 14px; flex: none; margin-right: 6px;
  background: #fff; border: 1px solid #8e8e8e; color: #111;
  font: 700 12px/12px "DejaVu Sans", sans-serif; text-align: center;
}

.vx { height: 203px; border: 1px solid #bcbcbc; border-left: 0; background: #fff; }
.vx-top { height: 187px; display: flex; }
.vx-clip { width: 276px; overflow: hidden; flex: none; }
.vt { border-collapse: collapse; table-layout: fixed; width: 276px; font-size: 15px; line-height: 1.1; }
.c0 { width: 10px; } .c1 { width: 100px; } .c2 { width: 66px; }
.vt th { font-weight: 400; padding: 0 0 1px; background: linear-gradient(#f7f7f7, #ececec); border: 1px solid #c4c4c4; overflow: hidden; }
.vt thead th { height: 20px; border-top: 0; padding-bottom: 2px; }
.vt .hr { padding-left: 34px; }
.vt tbody th { text-align: left; border-left: 0; }
.vt thead th:first-child { border-left: 0; }
.vt td { height: 30px; padding: 0 0 2px 4px; border: 1px solid #cfcfcf; white-space: nowrap; overflow: hidden; }
.hsb { height: 14px; display: flex; border-top: 1px solid #d0d0d0; }
.hb { width: 13px; background: #f8f8f8; position: relative; flex: none; }
.lf::after, .rt::after { content: ""; position: absolute; top: 2px; left: 2px; border: 4px solid transparent; border-left: 0; border-right: 4px solid #555; }
.rt::after { left: 5px; border-right: 0; border-left: 4px solid #555; }
.hthumb { width: 166px; background: #fff; border-left: 1px solid #ccc; flex: none; }
.htrack { width: 84px; background: #e4e4e4; flex: none; }
.corner { width: 15px; flex: none; background: #eee; border-left: 1px solid #c8c8c8; }
.vsb2 { background: #fff; }

.canvas { flex: 1; background: #fff; border-left: 1px solid #bcbcbc; border-bottom: 1px solid #bcbcbc; }
.map { display: block; width: 1540px; height: 740px; }
.feat { fill: #bed050; stroke: #232323; stroke-width: 1; }
.vtx circle { fill: none; stroke: #f00; stroke-width: 2; }

/* status */
.status { height: 29px; flex: 1; display: flex; align-items: center; padding-left: 2px; background: #eee; font-size: 12.5px; white-space: nowrap; }
.locator {
  width: 266px; height: 24px; flex: none; margin-top: 1px;
  display: flex; align-items: center; padding-left: 9px;
  background: #fff; border: 1px solid #bbb; border-radius: 3px;
  color: #8c8c8c; font-size: 14.8px;
}
.loc { width: 14px; height: 14px; margin-right: 3px; flex: none; }
.smsg { margin-left: 9px; flex: none; width: 240px; letter-spacing: -.38px; }
.sright { margin-left: auto; display: flex; align-items: center; width: 897px; flex: none; overflow: hidden; }
.lbl { flex: none; letter-spacing: -.4px; }
.w61 { width: 61px; } .w28 { width: 28px; } .w53 { width: 53px; } .w47 { width: 47px; } .w38 { width: 38px; } .w58 { width: 58px; }
.m3 { margin-left: 3px; } .m5 { margin-left: 5px; } .m6 { margin-left: 6px; } .m8 { margin-left: 8px; } .m10 { margin-left: 10px; } .m15 { margin-left: 15px; } .m16 { margin-left: 16px; } .m24 { margin-left: 24px; }
.fld {
  height: 23px; flex: none; display: flex; align-items: center; margin-left: 3px;
  background: #fff; border: 1px solid #bbb; border-radius: 3px; overflow: hidden;
}
.fld em { font-style: normal; flex: 1; padding-left: 4px; }
.f-coord { width: 127px; padding-left: 8px; letter-spacing: -.5px; }
.f-scale { width: 96px; margin-left: 5px; }
.f-mag { width: 97px; }
.f-rot { width: 93px; margin-left: 10px; }
.carr { width: 21px; height: 100%; flex: none; border-left: 1px solid #ccc; position: relative; background: #f6f6f6; }
.carr::after { content: ""; position: absolute; left: 6px; top: 8px; border: 4px solid transparent; border-bottom: 0; border-top: 5px solid #888; }
.spin { width: 14px; height: 100%; flex: none; display: flex; flex-direction: column; border-left: 1px solid #ccc; background: #f6f6f6; }
.spin b { flex: 1; position: relative; }
.spin b::after { content: ""; position: absolute; left: 3px; top: 3px; border: 3.5px solid transparent; border-top: 0; border-bottom: 4px solid #666; }
.spin b + b::after { top: 3px; border-bottom: 0; border-top: 4px solid #666; }
.si { width: 15px; height: 16px; flex: none; }
.si-l { width: 14px; height: 20px; flex: none; margin-left: 11px; }
.cb2 { margin: 0 0 0 7px; }
```
